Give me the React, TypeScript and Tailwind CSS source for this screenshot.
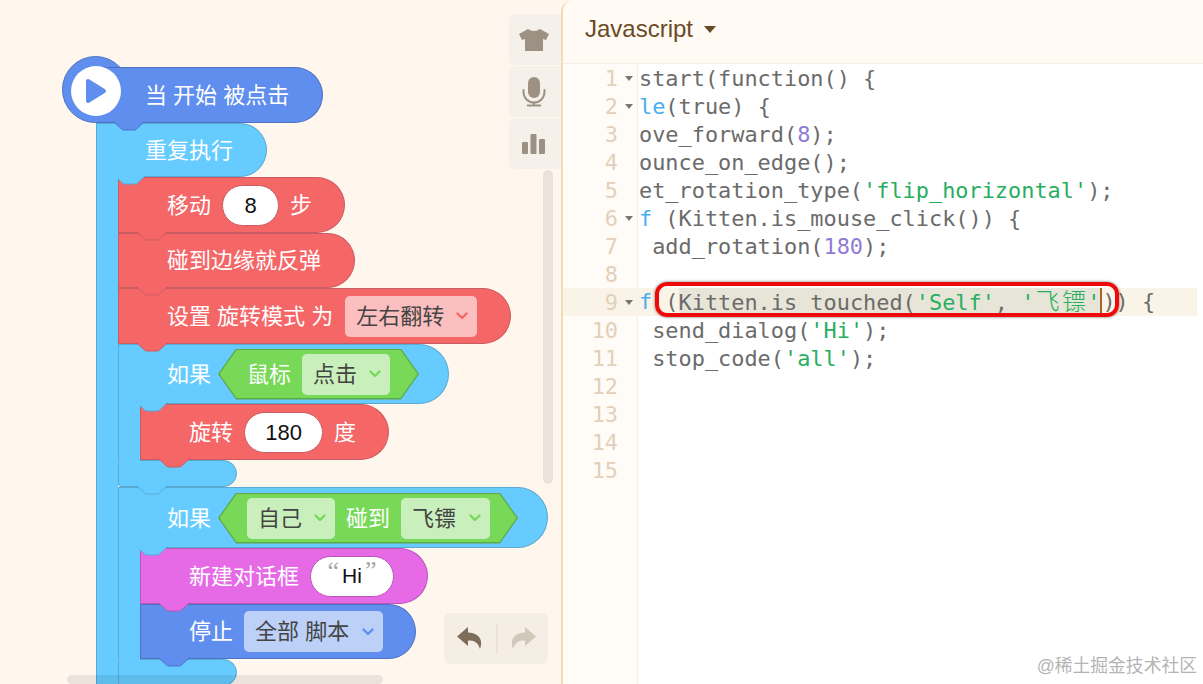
import React from "react";

type Theme = { bg: string; border: string; fill: string; arrow: string };
const red: Theme = { bg: "bg-[#f56667]", border: "border-[#c95c62]", fill: "fill-[#f56667] stroke-[#c95c62]", arrow: "text-[#f56667]" };
const sky: Theme = { bg: "bg-[#66ccff]", border: "border-[#5aa9d2]", fill: "fill-[#66ccff] stroke-[#5aa9d2]", arrow: "text-[#66ccff]" };
const blue: Theme = { bg: "bg-[#5f8eee]", border: "border-[#4d73c4]", fill: "fill-[#5f8eee] stroke-[#4d73c4]", arrow: "text-[#5f8eee]" };
const pink: Theme = { bg: "bg-[#e66ae6]", border: "border-[#b758b8]", fill: "fill-[#e66ae6] stroke-[#b758b8]", arrow: "text-[#e66ae6]" };

const zs = ["z-[12]", "z-[11]", "z-[10]", "z-[9]", "z-[8]", "z-[7]", "z-[6]", "z-[5]"];

function Bump({ theme }: { theme: Theme }) {
  return (
    <svg width="32" height="10" viewBox="0 0 32 10" className={"absolute left-[17px] top-full -mt-[1px] " + theme.fill}>
      <path d="M0.5 0.5 L8.5 8 Q9.5 9 11 9 L21 9 Q22.5 9 23.5 8 L31.5 0.5" strokeWidth="1" />
      <path d="M1.5 0 L30.5 0 L30.5 0.8 L1.5 0.8 Z" stroke="none" />
    </svg>
  );
}

function Block({ theme, w, h, children, round = "rounded-r-full" }: { theme: Theme; w: string; h: string; children?: React.ReactNode; round?: string }) {
  return (
    <div className={`relative flex items-center gap-[11px] rounded-l-[3px] border pl-[48px] text-[22px] text-white ${round} ${theme.bg} ${theme.border} ${w} ${h}`}>
      {children}
      <Bump theme={theme} />
    </div>
  );
}

function Stack({ children }: { children: React.ReactNode }) {
  return (
    <div className="flex flex-col">
      {React.Children.map(children, (c, i) => (
        <div className={"relative " + zs[i]}>{c}</div>
      ))}
    </div>
  );
}

function CBlock({ theme, headW, headH, head, footW = "w-[119px]", children }: { theme: Theme; headW: string; headH: string; head: React.ReactNode; footW?: string; children: React.ReactNode }) {
  return (
    <div className="flex flex-col">
      <div className="relative z-20">
        <Block theme={theme} w={headW} h={headH}>{head}</Block>
      </div>
      <div className="flex">
        <div className={`relative z-30 -my-[1px] w-[22px] shrink-0 border-l ${theme.bg} ${theme.border}`} />
        <div className="relative z-10">{children}</div>
      </div>
      <div className="relative z-0">
        <Block theme={theme} w={footW} h="h-[27px]" round="rounded-r-[14px]" />
      </div>
    </div>
  );
}

function Chevron({ className }: { className: string }) {
  return (
    <svg width="12" height="8" viewBox="0 0 12 8" fill="none" stroke="currentColor" strokeWidth="2.4" strokeLinecap="round" strokeLinejoin="round" className={className}>
      <path d="M1.5 1.5 L6 6 L10.5 1.5" />
    </svg>
  );
}

function Drop({ text, w, bg, arrow, extra = "" }: { text: string; w: string; bg: string; arrow: string; extra?: string }) {
  return (
    <div className={`flex h-[41px] shrink-0 items-center justify-between rounded-[5px] pl-[11px] pr-[9px] text-[22px] text-[#444444] ${w} ${bg} ${extra}`}>
      <span>{text}</span>
      <Chevron className={arrow} />
    </div>
  );
}

function Field({ w, children, border }: { w: string; children: React.ReactNode; border: string }) {
  return (
    <div className={`flex h-[41px] shrink-0 items-center justify-center rounded-full border bg-white text-[22px] text-[#111111] ${w} ${border}`}>
      {children}
    </div>
  );
}

function Hex({ w, children }: { w: string; children: React.ReactNode }) {
  return (
    <div className={`relative flex h-[51px] shrink-0 items-center gap-[11px] pl-[29px] ${w}`}>
      <div className="absolute inset-0 bg-[#5fa846] [clip-path:polygon(0_50%,18px_0,calc(100%-18px)_0,100%_50%,calc(100%-18px)_100%,18px_100%)]" />
      <div className="absolute inset-[1.5px] bg-[#78d858] [clip-path:polygon(0_50%,17px_0,calc(100%-17px)_0,100%_50%,calc(100%-17px)_100%,17px_100%)]" />
      <div className="relative flex items-center gap-[11px]">{children}</div>
    </div>
  );
}

function Tab({ children }: { children: React.ReactNode }) {
  return <div className="flex h-[51px] w-[52px] items-center justify-center rounded-l-[6px] bg-[#f5f0ea] pr-[3px]">{children}</div>;
}

const kw = "text-[#4aaeef]";
const num = "text-[#8f7ad6]";
const str = "text-[#27ae60]";

function Han({ c }: { c: string }) {
  return <span className="inline-block w-[26.4px] text-center align-baseline text-[24px] leading-none font-light [font-family:'Noto_Sans_CJK_SC',sans-serif]">{c}</span>;
}

const lines: React.ReactNode[] = [
  <>start(function() {"{"}</>,
  <><span className={kw}>le</span>(true) {"{"}</>,
  <>ove_forward(<span className={num}>8</span>);</>,
  <>ounce_on_edge();</>,
  <>et_rotation_type(<span className={str}>'flip_horizontal'</span>);</>,
  <><span className={kw}>f</span> (Kitten.is_mouse_click()) {"{"}</>,
  <> add_rotation(<span className={num}>180</span>);</>,
  <></>,
  <>
    <span className={kw}>f</span> (
    <span className="inline-block h-[27px] border-r-2 border-[#a5682a] bg-[#e7e5d7] align-top">
      Kitten.is_touched(<span className={str}>'Self'</span>, <span className={str}>'<Han c="飞" /><Han c="镖" />'</span>
    </span>
    )) {"{"}
  </>,
  <> send_dialog(<span className={str}>'Hi'</span>);</>,
  <> stop_code(<span className={str}>'all'</span>);</>,
  <></>,
  <></>,
  <></>,
  <></>,
];
const folds = [0, 1, 5, 8];

export default function App() {
  return (
    <div className="flex h-[684px] w-[1203px] overflow-hidden bg-[#fff7ee] [font-family:'Liberation_Sans','Noto_Sans_CJK_SC',sans-serif]">
      {/* workspace */}
      <div className="relative h-[684px] w-[561px] shrink-0 overflow-hidden pl-[96px] pt-[67px]">
        <div className="relative z-40">
          <div className="absolute -left-[34px] -top-[11px] z-0 h-[67px] w-[67px] rounded-full border border-[#4d73c4] bg-[#5f8eee]" />
          <div className="relative z-10">
            <div className="relative flex h-[56px] w-[227px] items-center rounded-r-full border border-l-0 border-[#4d73c4] bg-[#5f8eee] pl-[49px] text-[22px] text-white">
              <div className="absolute -left-[25px] top-[-2px] flex h-[50px] w-[50px] items-center justify-center rounded-full bg-white">
                <svg width="22" height="26" viewBox="0 0 22 26">
                  <path d="M3 3 L19 13 L3 23 Z" fill="#5f8eee" stroke="#5f8eee" strokeWidth="4" strokeLinejoin="round" />
                </svg>
              </div>
              当 开始 被点击
              <Bump theme={blue} />
            </div>
          </div>
        </div>
        <CBlock theme={sky} headW="w-[171px]" headH="h-[54px]" head={<span>重复执行</span>}>
          <Stack>
            <Block theme={red} w="w-[227px]" h="h-[56px]">
              <span>移动</span>
              <Field w="w-[57px]" border="border-[#c95c62]">8</Field>
              <span>步</span>
            </Block>
            <Block theme={red} w="w-[237px]" h="h-[55px]"><span>碰到边缘就反弹</span></Block>
            <Block theme={red} w="w-[393px]" h="h-[56px]">
              <span>设置 旋转模式 为</span>
              <Drop text="左右翻转" w="w-[132px]" bg="bg-[#fbbfbf]" arrow={red.arrow} extra="ml-[1px]" />
            </Block>
            <CBlock
              theme={sky}
              headW="w-[331px]"
              headH="h-[60px]"
              head={
                <>
                  <span className="-mr-[4px]">如果</span>
                  <Hex w="w-[201px]">
                    <span>鼠标</span>
                    <Drop text="点击" w="w-[88px]" bg="bg-[#c9f0bc]" arrow="text-[#78d858]" />
                  </Hex>
                </>
              }
            >
              <Block theme={red} w="w-[249px]" h="h-[56px]">
                <span>旋转</span>
                <Field w="w-[79px]" border="border-[#c95c62]">180</Field>
                <span>度</span>
              </Block>
            </CBlock>
            <CBlock
              theme={sky}
              headW="w-[430px]"
              headH="h-[61px]"
              head={
                <>
                  <span className="-mr-[4px] mt-[1px]">如果</span>
                  <Hex w="w-[300px] mt-[1px]">
                    <Drop text="自己" w="w-[88px]" bg="bg-[#c9f0bc]" arrow="text-[#78d858]" />
                    <span>碰到</span>
                    <Drop text="飞镖" w="w-[89px]" bg="bg-[#c9f0bc]" arrow="text-[#78d858]" />
                  </Hex>
                </>
              }
            >
              <Stack>
                <Block theme={pink} w="w-[288px]" h="h-[56px]">
                  <span>新建对话框</span>
                  <Field w="w-[84px]" border="border-[#b758b8]">
                    <span className="-mt-[10px] mr-[3px] text-[26px] leading-none text-[#a5a5a5] [font-family:'Liberation_Serif',serif]">“</span>
                    <span className="text-[21px]">Hi</span>
                    <span className="-mt-[10px] ml-[3px] text-[26px] leading-none text-[#a5a5a5] [font-family:'Liberation_Serif',serif]">”</span>
                  </Field>
                </Block>
                <Block theme={blue} w="w-[276px]" h="h-[55px]">
                  <span>停止</span>
                  <Drop text="全部 脚本" w="w-[139px]" bg="bg-[#bcd0f8]" arrow={blue.arrow} />
                </Block>
              </Stack>
            </CBlock>
          </Stack>
        </CBlock>

        {/* scrollbars */}
        <div className="absolute left-[543px] top-[170px] z-50 h-[314px] w-[10px] rounded-full bg-black/[0.08]" />
        <div className="absolute bottom-0 left-[67px] z-50 h-[9px] w-[316px] rounded-full bg-black/[0.08]" />

        {/* side tabs */}
        <div className="absolute left-[509px] top-[14px] z-50 flex flex-col gap-[1px]">
          <Tab>
            <svg width="32" height="24" viewBox="0 0 32 24" fill="#9c9183">
              <path d="M10 1 Q16 5 22 1 L31 6 L28 12 L25 11 L25 23 L7 23 L7 11 L4 12 L1 6 Z" strokeLinejoin="round" />
            </svg>
          </Tab>
          <Tab>
            <svg width="24" height="30" viewBox="0 0 24 30" fill="#9c9183">
              <rect x="6" y="0" width="12" height="21" rx="6" />
              <path d="M1.5 13 v2 a10.5 10.5 0 0 0 21 0 v-2" fill="none" stroke="#9c9183" strokeWidth="2" strokeLinecap="round" />
              <rect x="11" y="25" width="2" height="3" />
              <rect x="5" y="27.5" width="14" height="2" />
            </svg>
          </Tab>
          <Tab>
            <svg width="23" height="20" viewBox="0 0 23 20" fill="#9c9183">
              <rect x="0" y="8" width="6" height="12" rx="1" />
              <rect x="8.5" y="0" width="6" height="20" rx="1" />
              <rect x="17" y="5" width="6" height="15" rx="1" />
            </svg>
          </Tab>
        </div>

        {/* undo / redo */}
        <div className="absolute left-[444px] top-[613px] z-50 flex h-[51px] w-[104px] items-center rounded-[6px] bg-[#f5eee5]">
          <div className="flex w-[52px] justify-center">
            <svg width="26" height="23" viewBox="0 0 26 23" fill="#7d6d5a">
              <path d="M11 0 L0 9.5 L11 19 L11 13.5 C17 13.5 21 15 23 22 C26.5 13 22 6 11 5.5 Z" strokeLinejoin="round" />
            </svg>
          </div>
          <div className="h-[30px] w-[2px] bg-[#ebe3d8]" />
          <div className="flex flex-1 justify-center">
            <svg width="26" height="23" viewBox="0 0 26 23" fill="#d2c8b9">
              <path d="M15 0 L26 9.5 L15 19 L15 13.5 C9 13.5 5 15 3 22 C-0.5 13 4 6 15 5.5 Z" strokeLinejoin="round" />
            </svg>
          </div>
        </div>
      </div>

      {/* code panel */}
      <div className="relative flex h-[684px] flex-1 flex-col rounded-tl-[12px] border-l-2 border-[#f2dcb3] bg-white">
        <div className="flex h-[64px] shrink-0 items-center gap-[11px] rounded-tl-[12px] border-b border-[#f6eee0] bg-[#fffaf4] pb-[6px] pl-[22px] text-[24px] text-[#6b4a26]">
          <span>Javascript</span>
          <span className="mt-[1px] h-0 w-0 border-x-[6.5px] border-t-[7px] border-x-transparent border-t-[#6b4a26]" />
        </div>
        <div className="relative flex flex-1 flex-col pr-[6px] [font-family:'DejaVu_Sans_Mono',monospace] text-[21.9px] leading-[28px] text-[#6b6b6b]">
          <div className="absolute bottom-0 left-0 top-0 w-[75px] border-r border-[#f6eee0] bg-[#fffcf8]" />
          {lines.map((line, i) => (
            <div key={i} className={"relative flex h-[28px] whitespace-pre " + (i === 8 ? "bg-[#f9f4e7]" : "")}>
              <div className="flex w-[75px] shrink-0 items-center pt-[2px]">
                <span className="w-[55px] text-right text-[#e2d0b8]">{i + 1}</span>
                {folds.includes(i) && (
                  <span className="ml-[7px] -mt-[2px] h-0 w-0 border-x-[4.5px] border-t-[5px] border-x-transparent border-t-[#777777]" />
                )}
              </div>
              <div className={"pl-[1px] " + (i === 8 ? "pt-0" : "pt-[1px]")}>{line}</div>
            </div>
          ))}
          <div className="absolute left-[92px] top-[218px] h-[35px] w-[464px] rounded-[12px] border-4 border-[#ee0a0a] shadow-[0_0_3px_rgba(0,0,0,0.6)]" />
        </div>
        <div className="absolute bottom-[6px] right-[6px] text-[17.8px] leading-[24px] text-[#b4b4b4]">@稀土掘金技术社区</div>
      </div>
    </div>
  );
}
